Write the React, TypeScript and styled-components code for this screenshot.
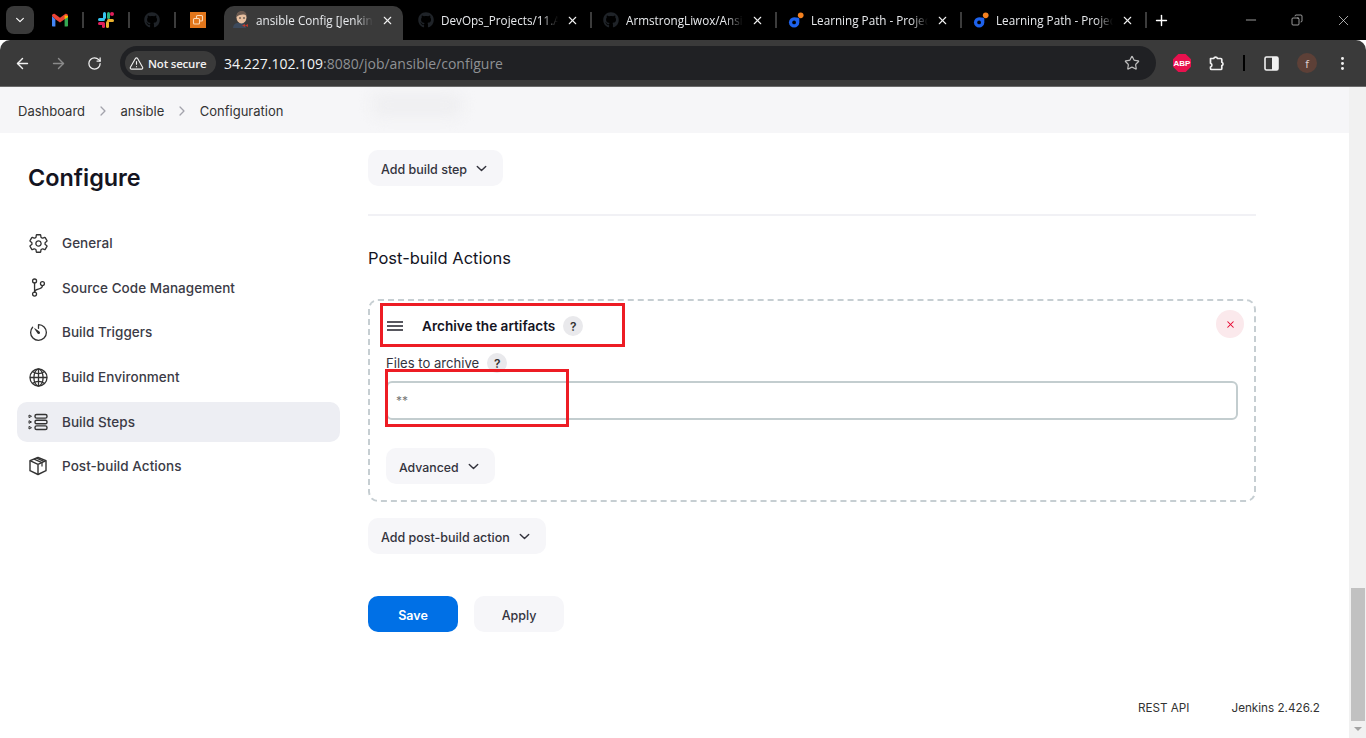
import styled, { createGlobalStyle } from "styled-components";
import { FaGithub } from "react-icons/fa";
import {
  IoChevronDown,
  IoChevronForward,
  IoGitBranchOutline,
  IoGlobeOutline,
  IoSettingsOutline,
  IoTimerOutline,
} from "react-icons/io5";
import { ArrowLeft, ArrowRight, Copy, Minus, MoreVertical, Plus, RotateCw, Star, TriangleAlert, X } from "lucide-react";

const GlobalStyle = createGlobalStyle`
  html, body {
    margin: 0;
    padding: 0;
    height: 100%;
    overflow: hidden;
    background: #fff;
  }
  * { box-sizing: border-box; }
`;

const GmailIcon = () => (
  <svg width="16" height="14" viewBox="0 0 16 14">
    <path d="M0 3v9.500c0 .6.4 1 1 1h2.400V6.200z" fill="#4285f4" />
    <path d="M16 3v9.500c0 .6-.4 1-1 1h-2.400V6.200z" fill="#34a853" />
    <path d="M0 3l3.400 3.200L8 9.600l4.600-3.400L16 3c0-2-1.800-2.800-3.200-1.800L8 4.800 3.200 1.200C1.800.2 0 1 0 3z" fill="#ea4335" />
    <path d="M12.600 6.200V2.200L16 3v1.200z" fill="#fbbc04" />
  </svg>
);

const SlackIcon = () => (
  <svg width="16" height="16" viewBox="0 0 16 16">
    <rect x="0" y="6" width="7" height="3" rx="1.500" fill="#36c5f0" />
    <rect x="5" y="0" width="3" height="7" rx="1.500" fill="#36c5f0" />
    <rect x="9" y="0" width="3" height="7" rx="1.500" fill="#2eb67d" />
    <circle cx="14" cy="2" r="2" fill="#e01e5a" />
    <rect x="9" y="7" width="7" height="3" rx="1.500" fill="#ecb22e" />
    <rect x="8" y="9" width="3" height="7" rx="1.500" fill="#ecb22e" />
    <rect x="0" y="10" width="7" height="3" rx="1.500" fill="#e01e5a" />
    <rect x="4" y="11" width="3" height="5" rx="1.500" fill="#e01e5a" />
  </svg>
);

const OrangeBoxIcon = () => (
  <svg width="16" height="16" viewBox="0 0 16 16">
    <rect width="16" height="16" fill="#e2761b" />
    <rect x="6.500" y="3.500" width="6" height="5.500" rx="1" fill="none" stroke="#fbd9b8" strokeWidth="1.100" />
    <rect x="3.500" y="6.500" width="6" height="5.500" rx="1" fill="#e2761b" stroke="#fbd9b8" strokeWidth="1.100" />
  </svg>
);

const JenkinsIcon = () => (
  <svg width="16" height="18" viewBox="0 0 16 18">
    <path d="M0 17c0-3 2-4.500 4-5h6c2 .5 3 2 3 5z" fill="#3d4a5c" />
    <ellipse cx="8.500" cy="6.500" rx="5" ry="6" fill="#e8c0a0" />
    <path d="M3.500 6C3 1.500 6.500 0 9 0s5 2 4.500 5C11.500 3 7.500 3 3.500 6z" fill="#6b5a50" />
    <circle cx="7" cy="7" r=".8" fill="#222" />
    <circle cx="11" cy="7" r=".8" fill="#222" />
    <path d="M9 14.500l3-1.500v3zM15 13v3l-3-1.500z" fill="#c0392b" />
  </svg>
);

const LearnIcon = () => (
  <svg width="17" height="17" viewBox="0 0 17 17">
    <circle cx="13.500" cy="3" r="3" fill="#f5811f" />
    <path d="M11 5.500l1 1v4a5.500 5.500 0 1 1-5.500-5.500z" fill="#1e62ec" />
    <circle cx="6.500" cy="10.500" r="2" fill="#000" />
  </svg>
);

const AbpIcon = () => (
  <svg width="18" height="18" viewBox="0 0 18 18">
    <path d="M5.300 0h7.400L18 5.300v7.400L12.700 18H5.300L0 12.700V5.300z" fill="#e8114e" />
  </svg>
);

const PuzzleIcon = () => (
  <svg width="17" height="17" viewBox="0 0 17 17" fill="none" stroke="#f1f1f1" strokeWidth="1.700" strokeLinejoin="round">
    <path d="M1.500 3.500h3.200a2 2 0 0 1 3.800 0h3.300c.6 0 1 .4 1 1v2.700a1.800 1.800 0 0 1 0 3.400v2.900c0 .6-.4 1-1 1H2.500c-.6 0-1-.4-1-1v-1.500a2 2 0 0 0 0-3.800z" />
  </svg>
);

const SidePanelIcon = () => (
  <svg width="15" height="15" viewBox="0 0 15 15">
    <rect x="1" y="1" width="13" height="13" rx="1.500" fill="none" stroke="#f1f1f1" strokeWidth="1.600" />
    <rect x="8" y="1" width="6" height="13" fill="#f1f1f1" />
  </svg>
);

const BuildStepsIcon = () => (
  <svg width="20" height="20" viewBox="0 0 20 20" fill="none" stroke="#333" strokeWidth="1.400">
    <rect x="7" y="2.500" width="12" height="3.600" rx="1.600" />
    <rect x="7" y="8.200" width="12" height="3.600" rx="1.600" />
    <rect x="7" y="13.900" width="12" height="3.600" rx="1.600" />
    <path d="M1 3l2.500 1.300L1 5.600zM1 8.700L3.500 10 1 11.300zM1 14.400l2.500 1.300L1 17z" strokeWidth="1" />
  </svg>
);

const PostBuildIcon = () => (
  <svg width="20" height="20" viewBox="0 0 20 20" fill="none" stroke="#333" strokeWidth="1.400" strokeLinejoin="round">
    <path d="M10 1.500l8 3.200v10L10 18.500 2 14.700v-10z" />
    <path d="M2 4.700l8 3.600 8-3.600M10 8.300v10.200" />
    <path d="M6 3.100l8 3.500v4M8.500 2.100l8 3.500" strokeWidth="1.200" />
  </svg>
);

const HamburgerIcon = () => (
  <svg width="16" height="10" viewBox="0 0 16 10" stroke="#20202a" strokeWidth="1.300">
    <path d="M0 1h16M0 5h16M0 9h16" />
  </svg>
);

const sideItems = [
  { label: "General", icon: <IoSettingsOutline size={21} /> },
  { label: "Source Code Management", icon: <IoGitBranchOutline size={21} /> },
  { label: "Build Triggers", icon: <IoTimerOutline size={21} /> },
  { label: "Build Environment", icon: <IoGlobeOutline size={21} /> },
  { label: "Build Steps", icon: <BuildStepsIcon />, active: true },
  { label: "Post-build Actions", icon: <PostBuildIcon /> },
];

const tabs = [
  { title: "DevOps_Projects/11.Ansible", icon: <FaGithub size={16} color="#1f2328" /> },
  { title: "ArmstrongLiwox/Ansible", icon: <FaGithub size={16} color="#1f2328" /> },
  { title: "Learning Path - Projects", icon: <LearnIcon /> },
  { title: "Learning Path - Projects", icon: <LearnIcon /> },
];

const App = () => {
  return (
    <>
      <GlobalStyle />
      <Screen>
        <TabStrip>
          <TabSearch>
            <IoChevronDown size={12} color="#fff" />
          </TabSearch>
          <PinnedTab><GmailIcon /></PinnedTab>
          <PinnedSep />
          <PinnedTab><SlackIcon /></PinnedTab>
          <PinnedSep />
          <PinnedTab><FaGithub size={16} color="#1f2328" /></PinnedTab>
          <PinnedSep />
          <PinnedTab><OrangeBoxIcon /></PinnedTab>
          <ActiveGap />
          <Tab $active>
            <TabIcon><JenkinsIcon /></TabIcon>
            <TabTitle>ansible Config [Jenkins]</TabTitle>
            <TabClose><X size={13} strokeWidth={2} /></TabClose>
          </Tab>
          <TabSep />
          {tabs.map((tab, i) => (
            <TabGroup key={i}>
              <Tab>
                <TabIcon>{tab.icon}</TabIcon>
                <TabTitle>{tab.title}</TabTitle>
                <TabClose><X size={13} strokeWidth={2} /></TabClose>
              </Tab>
              <TabSep $visible />
            </TabGroup>
          ))}
          <NewTab><Plus size={17} strokeWidth={2} /></NewTab>
          <WindowControls>
            <WindowButton><Minus size={16} strokeWidth={1} /></WindowButton>
            <WindowButton><Copy size={12} strokeWidth={1.300} style={{ transform: "scaleX(-1)" }} /></WindowButton>
            <WindowButton><X size={17} strokeWidth={1} /></WindowButton>
          </WindowControls>
        </TabStrip>

        <Toolbar>
          <NavButton><ArrowLeft size={17} strokeWidth={2} /></NavButton>
          <NavButton $disabled><ArrowRight size={17} strokeWidth={2} /></NavButton>
          <NavButton><RotateCw size={15} strokeWidth={2} /></NavButton>
          <Omnibox>
            <SecurityChip>
              <TriangleAlert size={15} strokeWidth={1.800} />
              Not secure
            </SecurityChip>
            <Url>
              34.227.102.109<UrlRest>:8080/job/ansible/configure</UrlRest>
            </Url>
            <StarSlot><Star size={16} strokeWidth={1.800} /></StarSlot>
          </Omnibox>
          <Extensions>
            <AbpBadge>
              <AbpIcon />
              <AbpText>ABP</AbpText>
            </AbpBadge>
            <ExtensionSlot><PuzzleIcon /></ExtensionSlot>
            <ToolbarSep />
            <SideSlot><SidePanelIcon /></SideSlot>
            <Avatar>f</Avatar>
            <MenuSlot><MoreVertical size={17} strokeWidth={2.200} /></MenuSlot>
          </Extensions>
        </Toolbar>

        <Viewport>
          <Page>
            <Breadcrumbs>
              <Crumb>Dashboard</Crumb>
              <CrumbSep><IoChevronForward size={14} /></CrumbSep>
              <Crumb>ansible</Crumb>
              <CrumbSep><IoChevronForward size={14} /></CrumbSep>
              <Crumb>Configuration</Crumb>
              <GhostText />
            </Breadcrumbs>

            <Layout>
              <Sidebar>
                <SideTitle>Configure</SideTitle>
                <SideNav>
                  {sideItems.map((item) => (
                    <SideItem key={item.label} $active={item.active}>
                      <SideIcon>{item.icon}</SideIcon>
                      {item.label}
                    </SideItem>
                  ))}
                </SideNav>
              </Sidebar>

              <Content>
                <DropButton>
                  Add build step <IoChevronDown size={15} />
                </DropButton>
                <Divider />
                <SectionTitle>Post-build Actions</SectionTitle>

                <ActionCard>
                  <CardHeader>
                    <HamburgerIcon />
                    <CardTitle>Archive the artifacts</CardTitle>
                    <HelpBadge>?</HelpBadge>
                  </CardHeader>
                  <DeleteButton><X size={11} strokeWidth={2.200} /></DeleteButton>
                  <FieldLabel>
                    Files to archive
                    <HelpBadge>?</HelpBadge>
                  </FieldLabel>
                  <FieldInput readOnly value="**" />
                  <AdvancedButton>
                    Advanced <IoChevronDown size={15} />
                  </AdvancedButton>
                  <Annotation $left={10} $top={2} $width={245} $height={44} />
                  <Annotation $left={15} $top={68} $width={184} $height={58} />
                </ActionCard>

                <DropButton>
                  Add post-build action <IoChevronDown size={15} />
                </DropButton>

                <FormActions>
                  <SaveButton>Save</SaveButton>
                  <ApplyButton>Apply</ApplyButton>
                </FormActions>
              </Content>
            </Layout>

            <Footer>
              <FooterLink>REST API</FooterLink>
              <FooterLink>Jenkins 2.426.2</FooterLink>
            </Footer>
          </Page>

          <Scrollbar>
            <ScrollThumb />
            <ScrollArrow />
          </Scrollbar>
        </Viewport>
      </Screen>
    </>
  );
};

export default App;

const Screen = styled.div`
  width: 1366px;
  height: 738px;
  display: flex;
  flex-direction: column;
  overflow: hidden;
  font-family: "Inter", "Liberation Sans", sans-serif;
`;

const TabStrip = styled.div`
  height: 40px;
  background: #000;
  display: flex;
  align-items: flex-end;
  padding-left: 6px;
  color: #fff;
  font-family: "Open Sans", "Liberation Sans", sans-serif;
`;

const TabSearch = styled.div`
  width: 28px;
  height: 28px;
  margin-bottom: 6px;
  border-radius: 8px;
  background: #3a3a3a;
  display: flex;
  align-items: center;
  justify-content: center;
  margin-right: 3px;
`;

const PinnedTab = styled.div`
  width: 46px;
  height: 34px;
  display: flex;
  align-items: center;
  justify-content: center;
  margin-bottom: 3px;
`;

const PinnedSep = styled.div`
  width: 2px;
  height: 16px;
  margin: 0 -1px 12px;
  background: #3c3c3c;
`;

const ActiveGap = styled.div`
  width: 3px;
`;

const TabGroup = styled.div`
  display: flex;
  align-items: flex-end;
`;

const Tab = styled.div<{ $active?: boolean }>`
  width: 179px;
  height: 34px;
  padding: 0 8px 6px 9px;
  border-radius: 10px 10px 0 0;
  background: ${(p) => (p.$active ? "#3a3a3a" : "transparent")};
  display: flex;
  align-items: center;
  font-size: 11.700px;
`;

const TabIcon = styled.div`
  width: 16px;
  height: 18px;
  margin-right: 7px;
  display: flex;
  align-items: center;
  justify-content: center;
  flex-shrink: 0;
`;

const TabTitle = styled.div`
  flex: 1;
  min-width: 0;
  white-space: nowrap;
  overflow: hidden;
  color: #e8eaed;
  -webkit-mask-image: linear-gradient(to right, #000 85%, transparent);
  mask-image: linear-gradient(to right, #000 85%, transparent);
`;

const TabClose = styled.div`
  width: 16px;
  margin-left: 6px;
  display: flex;
  align-items: center;
  justify-content: center;
  color: #f1f1f1;
`;

const TabSep = styled.div<{ $visible?: boolean }>`
  width: 2px;
  height: 16px;
  margin: 0 2px 12px;
  background: ${(p) => (p.$visible ? "#3c3c3c" : "transparent")};
`;

const NewTab = styled.div`
  width: 20px;
  height: 34px;
  margin-left: 2px;
  margin-bottom: 3px;
  display: flex;
  align-items: center;
  justify-content: center;
`;

const WindowControls = styled.div`
  margin-left: auto;
  height: 40px;
  display: flex;
  align-self: flex-start;
`;

const WindowButton = styled.div`
  width: 46px;
  height: 40px;
  display: flex;
  align-items: center;
  justify-content: center;
  color: #e8e8e8;
`;

const Toolbar = styled.div`
  height: 46px;
  background: #3a3a3a;
  border-radius: 10px 10px 0 0;
  display: flex;
  align-items: center;
  padding-left: 4px;
  color: #fff;
  flex-shrink: 0;
`;

const NavButton = styled.div<{ $disabled?: boolean }>`
  width: 36px;
  height: 34px;
  display: flex;
  align-items: center;
  justify-content: center;
  color: ${(p) => (p.$disabled ? "#8a8a8a" : "#f1f1f1")};
`;

const Omnibox = styled.div`
  width: 1036px;
  height: 34px;
  margin-left: 8px;
  border-radius: 17px;
  background: #202124;
  display: flex;
  align-items: center;
  padding-left: 5px;
`;

const SecurityChip = styled.div`
  width: 91px;
  height: 24px;
  border-radius: 12px;
  background: #3a3a3a;
  display: flex;
  align-items: center;
  gap: 4px;
  padding-left: 4px;
  font-family: "Open Sans", "Liberation Sans", sans-serif;
  font-size: 11.500px;
  font-weight: 600;
  letter-spacing: -0.2px;
  color: #f1f1f1;
  white-space: nowrap;
`;

const Url = styled.div`
  margin-left: 8px;
  font-family: "Open Sans", "Liberation Sans", sans-serif;
  font-size: 14px;
  color: #f1f3f4;
`;

const UrlRest = styled.span`
  color: #8f9194;
`;

const StarSlot = styled.div`
  margin-left: auto;
  margin-right: 16px;
  display: flex;
  color: #bdbdbd;
`;

const Extensions = styled.div`
  flex: 1;
  display: flex;
  align-items: center;
  padding-left: 17px;
`;

const AbpBadge = styled.div`
  position: relative;
  width: 18px;
  height: 18px;
`;

const AbpText = styled.span`
  position: absolute;
  inset: 0;
  display: flex;
  align-items: center;
  justify-content: center;
  font-family: "Liberation Sans", sans-serif;
  font-size: 8px;
  font-weight: 700;
  color: #fff;
`;

const ExtensionSlot = styled.div`
  margin-left: 18px;
  display: flex;
`;

const ToolbarSep = styled.div`
  width: 2px;
  height: 16px;
  margin-left: 17px;
  background: #000;
`;

const SideSlot = styled.div`
  margin-left: 19px;
  display: flex;
`;

const Avatar = styled.div`
  width: 20px;
  height: 20px;
  margin-left: 18px;
  border-radius: 50%;
  background: #5d4037;
  color: #e0d6d3;
  font-family: "Open Sans", sans-serif;
  font-size: 11px;
  display: flex;
  align-items: center;
  justify-content: center;
`;

const MenuSlot = styled.div`
  margin-left: 17px;
  display: flex;
  color: #f1f1f1;
`;

const Viewport = styled.div`
  flex: 1;
  min-height: 0;
  display: flex;
  border-top: 1px solid #6a6a6a;
`;

const Page = styled.div`
  flex: 1;
  min-width: 0;
  display: flex;
  flex-direction: column;
  background: #fff;
  color: #333;
`;

const Breadcrumbs = styled.div`
  position: relative;
  height: 46px;
  flex-shrink: 0;
  padding: 2px 0 0 18px;
  background: #f6f6f8;
  display: flex;
  align-items: center;
  font-size: 13px;
  overflow: hidden;
`;

const Crumb = styled.span`
  color: #333;
`;

const CrumbSep = styled.span`
  width: 35.500px;
  display: flex;
  justify-content: center;
  color: #a3a3ac;
`;

const GhostText = styled.div`
  position: absolute;
  left: 372px;
  top: 6px;
  width: 90px;
  height: 24px;
  border-radius: 8px;
  background: #efeff1;
  filter: blur(7px);
`;

const Layout = styled.div`
  display: flex;
  flex: 1;
  min-height: 0;
`;

const Sidebar = styled.aside`
  width: 368px;
  flex-shrink: 0;
  padding: 30px 28px 0 17px;
`;

const SideTitle = styled.h1`
  margin: 0 0 31.300px 11px;
  font-size: 23.400px;
  line-height: 29px;
  font-weight: 600;
  color: #14141f;
`;

const SideNav = styled.nav`
  display: flex;
  flex-direction: column;
  gap: 4.600px;
`;

const SideItem = styled.div<{ $active?: boolean }>`
  height: 40px;
  padding-left: 11px;
  border-radius: 10px;
  background: ${(p) => (p.$active ? "#edeef3" : "transparent")};
  display: flex;
  align-items: center;
  font-size: 13.500px;
  font-weight: 500;
  letter-spacing: 0.05px;
  color: #3b3b46;
`;

const SideIcon = styled.span`
  width: 34px;
  display: flex;
  align-items: center;
  color: #333;
`;

const Content = styled.main`
  width: 888px;
  padding-top: 17px;
  display: flex;
  flex-direction: column;
  align-items: flex-start;
`;

const DropButton = styled.div`
  height: 36px;
  padding: 2px 14px 0 13px;
  border-radius: 10px;
  background: #f6f6f9;
  display: inline-flex;
  align-items: center;
  gap: 7px;
  font-size: 12.500px;
  font-weight: 500;
  color: #33333d;
  white-space: nowrap;

  svg {
    margin-top: -2px;
  }
`;

const Divider = styled.div`
  width: 100%;
  height: 2px;
  margin-top: 28px;
  background: #f1f1f5;
`;

const SectionTitle = styled.h2`
  margin: 30px 0 29px;
  font-size: 16.500px;
  line-height: 24px;
  font-weight: 400;
  color: #14141f;
`;

const ActionCard = styled.section`
  position: relative;
  width: 100%;
  height: 203px;
  margin-bottom: 16px;
  padding: 0 16px;
  border: 2px dashed #c6ced2;
  border-radius: 10px;
`;

const CardHeader = styled.div`
  height: 44px;
  margin: 3px 0 0 1px;
  display: flex;
  align-items: center;
`;

const CardTitle = styled.span`
  margin: 0 8px 0 19px;
  font-size: 13.600px;
  font-weight: 600;
  color: #14141f;
`;

const HelpBadge = styled.span`
  width: 20px;
  height: 20px;
  border-radius: 50%;
  background: #e9e9ec;
  display: inline-flex;
  align-items: center;
  justify-content: center;
  font-size: 12px;
  font-weight: 600;
  color: #333;
`;

const DeleteButton = styled.div`
  position: absolute;
  top: 9px;
  right: 10px;
  width: 28px;
  height: 28px;
  border-radius: 50%;
  background: #fbe9ec;
  color: #e6002e;
  display: flex;
  align-items: center;
  justify-content: center;
`;

const FieldLabel = styled.div`
  height: 20px;
  margin-top: 5px;
  display: flex;
  align-items: center;
  gap: 8px;
  font-size: 13.100px;
  color: #33333d;
`;

const FieldInput = styled.input`
  display: block;
  width: 852px;
  height: 39px;
  margin-top: 8px;
  padding: 0 8px;
  border: 2px solid #c3cdcf;
  border-radius: 6px;
  outline: none;
  font-family: "Inter", sans-serif;
  font-size: 12px;
  color: #777;
`;

const AdvancedButton = styled(DropButton)`
  margin-top: 28px;
  font-size: 12.300px;
`;

const FormActions = styled.div`
  margin-top: 42px;
  display: flex;
  gap: 16px;
`;

const SaveButton = styled.div`
  width: 90px;
  height: 36px;
  padding-top: 2px;
  border-radius: 10px;
  background: #0070e6;
  color: #fff;
  display: flex;
  align-items: center;
  justify-content: center;
  font-size: 12.500px;
  font-weight: 600;
`;

const ApplyButton = styled(SaveButton)`
  background: #f6f6f9;
  color: #33333d;
  font-weight: 500;
`;

const Annotation = styled.div<{ $left: number; $top: number; $width: number; $height: number }>`
  position: absolute;
  left: ${(p) => p.$left}px;
  top: ${(p) => p.$top}px;
  width: ${(p) => p.$width}px;
  height: ${(p) => p.$height}px;
  border: 3px solid #ed1c24;
  pointer-events: none;
`;

const Footer = styled.footer`
  height: 62px;
  flex-shrink: 0;
  padding: 2px 29px 0 0;
  display: flex;
  justify-content: flex-end;
  align-items: center;
  gap: 42px;
  font-size: 11.700px;
  color: #333;
`;

const FooterLink = styled.span``;

const Scrollbar = styled.div`
  position: relative;
  width: 17px;
  flex-shrink: 0;
  background: #f1f1f1;
`;

const ScrollThumb = styled.div`
  position: absolute;
  left: 2px;
  right: 1px;
  top: 501px;
  height: 133px;
  background: #c1c1c1;
`;

const ScrollArrow = styled.div`
  position: absolute;
  left: 5px;
  bottom: 7px;
  border-left: 4px solid transparent;
  border-right: 4px solid transparent;
  border-top: 4px solid #a3a3a3;
`;
